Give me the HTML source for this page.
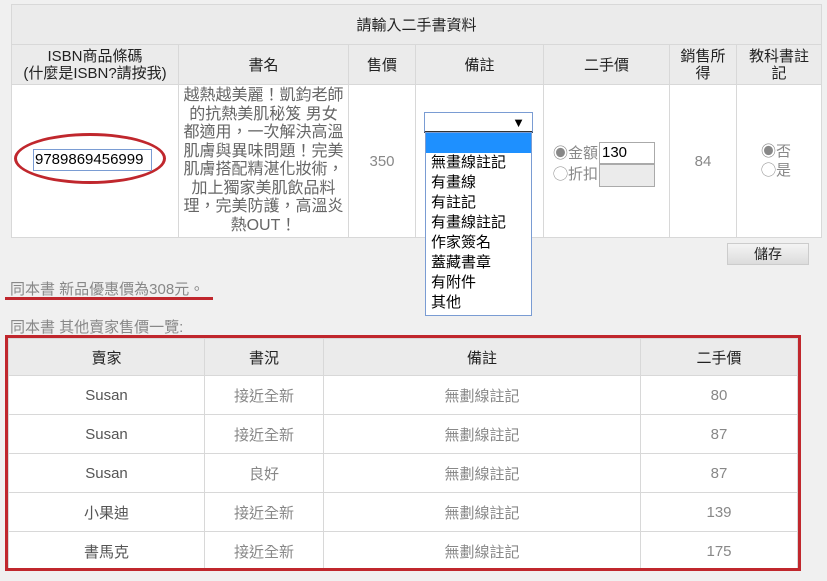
<!DOCTYPE html>
<html><head><meta charset="utf-8"><style>
*{box-sizing:border-box;margin:0;padding:0}
body{width:827px;height:581px;background:#f0f0f0;font-family:"Liberation Sans","Noto Sans CJK TC",sans-serif;font-size:15px;color:#222;position:relative;overflow:hidden}
.abs{position:absolute}
table{border-collapse:collapse;position:absolute}
td,th{border:1px solid #d8d8d8;text-align:center;font-weight:normal}
.t1{left:11px;top:4px;width:811px}
.t1 th{background:#ebebeb}
.t1 td{background:#fff;color:#888}
.g{color:#888}
.t2{left:8px;top:338px;width:790px}
.t2 th{background:#ebebeb;height:37px}
.t2 td{background:#fff;height:39px;color:#888}
</style></head><body>
<table class="t1">
<tr><th colspan="7" style="height:40px">請輸入二手書資料</th></tr>
<tr style="height:40px"><th style="width:167px;line-height:17px">ISBN商品條碼<br>(什麼是ISBN?請按我)</th><th style="width:170px">書名</th><th style="width:67px">售價</th><th style="width:128px">備註</th><th style="width:126px">二手價</th><th style="width:67px;line-height:17px">銷售所<br>得</th><th style="line-height:17px">教科書註<br>記</th></tr>
<tr style="height:153px"><td></td><td style="color:#666;line-height:18.5px;padding:2px 3px;font-size:16px">越熱越美麗！凱鈞老師的抗熱美肌秘笈 男女都適用，一次解決高溫肌膚與異味問題！完美肌膚搭配精湛化妝術，加上獨家美肌飲品料理，完美防護，高溫炎熱OUT！</td><td>350</td><td></td><td></td><td>84</td><td></td></tr>
</table>
<div class="abs" style="left:14px;top:133px;width:152px;height:51px;border:3px solid #c0272d;border-radius:50%"></div>
<div class="abs" style="left:33px;top:149px;width:119px;height:22px;border:1px solid #7a9cd3;background:#fff;font-size:15px;line-height:20px;padding-left:1px;color:#000">9789869456999</div>
<div class="abs" style="left:424px;top:112px;width:109px;height:21px;border:1px solid #7a9cd3;background:#fff;border-bottom:2px solid #333"><span class="abs" style="right:7px;top:2px;font-size:13px;color:#000">▼</span></div>
<div class="abs" style="left:425px;top:132px;width:107px;height:184px;border:1px solid #7a9cd3;background:#fff;color:#000;line-height:20px;font-size:15px">
<div style="background:#1e90ff;height:20px"></div>
<div style="padding-left:5px">無畫線註記<br>有畫線<br>有註記<br>有畫線註記<br>作家簽名<br>蓋藏書章<br>有附件<br>其他</div></div>
<div class="abs g" style="left:553px;top:143px;line-height:21px">◉金額<br>◯折扣</div>
<div class="abs" style="left:599px;top:142px;width:56px;height:22px;border:1px solid #aaa;background:#fff;color:#000;padding-left:2px;line-height:20px">130</div>
<div class="abs" style="left:599px;top:164px;width:56px;height:23px;border:1px solid #aaa;background:#ebebeb"></div>
<div class="abs g" style="left:761px;top:142px;line-height:19px">◉否<br>◯是</div>
<div class="abs" style="left:727px;top:243px;width:82px;height:22px;background:linear-gradient(#f4f4f4,#dcdcdc);border:1px solid #ccc;text-align:center;line-height:20px;font-size:14px">儲存</div>
<div class="abs g" style="left:10px;top:278px">同本書 新品優惠價為308元。</div>
<div class="abs" style="left:5px;top:297px;width:208px;height:3px;background:#c0272d"></div>
<div class="abs g" style="left:10px;top:316px">同本書 其他賣家售價一覽:</div>
<table class="t2">
<tr><th style="width:196px">賣家</th><th style="width:119px">書況</th><th style="width:317px">備註</th><th>二手價</th></tr>
<tr><td style="color:#555">Susan</td><td>接近全新</td><td>無劃線註記</td><td>80</td></tr>
<tr><td style="color:#555">Susan</td><td>接近全新</td><td>無劃線註記</td><td>87</td></tr>
<tr><td style="color:#555">Susan</td><td>良好</td><td>無劃線註記</td><td>87</td></tr>
<tr><td style="color:#555">小果迪</td><td>接近全新</td><td>無劃線註記</td><td>139</td></tr>
<tr><td style="color:#555;height:36px">書馬克</td><td>接近全新</td><td>無劃線註記</td><td>175</td></tr>
</table>
<div class="abs" style="left:5px;top:335px;width:796px;height:236px;border:3px solid #c0272d;z-index:5"></div>
</body></html>
